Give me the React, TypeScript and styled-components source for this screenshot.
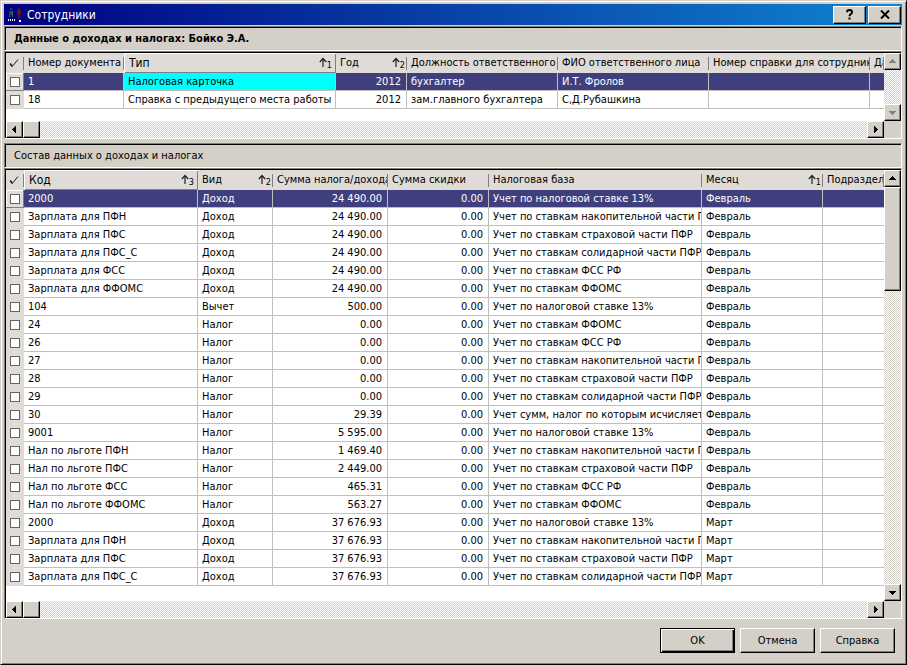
import React from "react";
import styled, { createGlobalStyle, css } from "styled-components";

const FACE = "#d4d0c8";
const HEAD = "#dfdcd8";
const SELECTED = "#403f7d";
const LINE = "#c0bfba";

const GlobalStyle = createGlobalStyle`
  * { box-sizing: border-box; }
  body { margin: 0; background: ${FACE}; }
  body, button, input, table {
    font-family: "DejaVu Sans Condensed", "Noto Sans", sans-serif;
    font-size: 11px;
    color: #000;
  }
`;

const raised = css`
  background: ${FACE};
  border: 1px solid;
  border-color: #fff #000 #000 #fff;
  box-shadow: inset -1px -1px 0 #808080;
  padding: 0;
  display: flex;
  align-items: center;
  justify-content: center;
`;

const dither = css`
  background: repeating-conic-gradient(#fff 0 25%, ${FACE} 0 50%) 0 0 / 2px 2px;
`;

const Window = styled.main`
  min-height: 100vh;
  display: flex;
  flex-direction: column;
  background: ${FACE};
  border: 1px solid;
  border-color: #d4d0c8 #000 #000 #d4d0c8;
  box-shadow: inset 1px 1px 0 #fff, inset -1px -1px 0 #808080;
  padding: 3px 4px 3px 3px;
`;

const TitleBar = styled.header`
  display: flex;
  align-items: center;
  gap: 2px;
  height: 21px;
  padding: 0 1px 0 3px;
  background: linear-gradient(to right, #000080, #1084d0);
`;

const Title = styled.h1`
  flex: 1;
  margin: 0;
  font-size: 12px;
  font-weight: normal;
  color: #fff;
`;

const CaptionButton = styled.button`
  ${raised}
  width: 33px;
  height: 18px;
`;

const Content = styled.div`
  flex: 1;
  display: flex;
  flex-direction: column;
  padding-top: 1px;
`;

const sunken = css`
  border: 1px solid;
  border-color: #808080 #fff #fff #808080;
`;

const Caption = styled.h2<{ $strong?: boolean }>`
  ${sunken}
  box-shadow: inset 1px 1px 0 #000;
  margin: 0;
  height: 25px;
  line-height: 24px;
  padding: 0 9px;
  font-size: 11px;
  font-weight: ${(p) => (p.$strong ? "bold" : "normal")};
`;

const Frame = styled.section<{ $fill?: boolean }>`
  ${sunken}
  display: grid;
  grid-template-columns: minmax(0, 1fr) 17px;
  grid-template-rows: minmax(0, 1fr) 17px;
  flex: ${(p) => (p.$fill ? "1" : "none")};
  margin-bottom: ${(p) => (p.$fill ? "9px" : "4px")};
  background: ${FACE};
`;

const Sheet = styled.div`
  background: #fff;
  border: solid #000;
  border-width: 1px 0 0 1px;
  padding-bottom: 12px;
  overflow: hidden;
`;

const Table = styled.table`
  width: 100%;
  table-layout: fixed;
  border-collapse: separate;
  border-spacing: 0;
`;

const Th = styled.th<{ $active?: boolean }>`
  height: 20px;
  padding: ${(p) => (p.$active ? "0 3px 0 5px" : "0 1px 0 4px")};
  font-weight: normal;
  font-size: ${(p) => (p.$active ? "12px" : "11px")};
  text-align: left;
  white-space: nowrap;
  overflow: hidden;
  background: ${HEAD} linear-gradient(#808080, #808080) right 4px / 1px 13px no-repeat;
  ${(p) =>
    p.$active &&
    css`
      background: ${HEAD};
      box-shadow: inset 1px 1px 0 #fff, inset -1px -1px 0 #808080;
    `}
`;

const HeadInner = styled.span`
  display: flex;
  align-items: center;
  justify-content: space-between;
  line-height: 16px;
  overflow: hidden;
`;

const HeadText = styled.span`
  min-width: 0;
  overflow: hidden;
`;

const SortMark = styled.span`
  display: flex;
  flex: none;
  align-items: flex-end;
  font-size: 9px;
  line-height: 10px;
  height: 13px;
  padding-right: 1px;
`;

const TickHead = styled.th`
  height: 20px;
  padding: 0 0 0 3px;
  background: ${HEAD} linear-gradient(#808080, #808080) right 4px / 1px 13px no-repeat;
  svg { display: block; }
`;

const Row = styled.tr<{ $selected?: boolean }>`
  color: ${(p) => (p.$selected ? "#fff" : "#000")};
  background: ${(p) => (p.$selected ? SELECTED : "#fff")};
`;

const Td = styled.td<{ $right?: boolean; $cursor?: boolean }>`
  height: 18px;
  padding: ${(p) => (p.$right ? "0 5px 0 4px" : "0 0 0 4px")};
  line-height: 17px;
  border: solid ${LINE};
  border-width: 0 1px 1px 0;
  text-align: ${(p) => (p.$right ? "right" : "left")};
  white-space: nowrap;
  color: inherit;
  ${(p) => p.$cursor && css`background: #00ffff; color: #000;`}
  &:last-child { border-right: 0; }
`;

const CellText = styled.div`
  overflow: hidden;
`;

const TickCell = styled.td<{ $selected?: boolean }>`
  height: 18px;
  padding: 0 0 0 4px;
  background: ${HEAD};
  ${(p) =>
    p.$selected &&
    css`box-shadow: inset -1px -1px 0 #808080, inset 1px 1px 0 #fff;`}
`;

const Tick = styled.input`
  appearance: none;
  display: block;
  width: 10px;
  height: 10px;
  margin: 0;
  border: 1px solid #66645f;
  background: #fff;
`;

const VBar = styled.div`
  ${dither}
  display: flex;
  flex-direction: column;
  border-top: 1px solid #000;
`;

const HBar = styled.div`
  ${dither}
  display: flex;
  border-left: 1px solid #000;
`;

const Spacer = styled.span`
  flex: 1;
`;

const ScrollButton = styled.button`
  ${raised}
  width: 17px;
  height: 17px;
  flex: none;
`;

const Thumb = styled.div<{ $long?: boolean }>`
  ${raised}
  flex: none;
  width: 17px;
  height: ${(p) => (p.$long ? "104px" : "17px")};
`;

const Footer = styled.footer`
  display: flex;
  justify-content: flex-end;
  gap: 5px;
  padding: 0 7px 8px;
`;

const PushButton = styled.button<{ $primary?: boolean }>`
  ${raised}
  width: 75px;
  height: 25px;
  ${(p) =>
    p.$primary &&
    css`
      border-color: #000;
      box-shadow: inset 1px 1px 0 #fff, inset -1px -1px 0 #000, inset -2px -2px 0 #808080;
    `}
`;

type Dir = "up" | "down" | "left" | "right";
const arrows: Record<Dir, string> = {
  up: "M3 1h1v1h1v1h1v1h1v1H0V4h1V3h1V2h1z",
  down: "M0 2h7v1H6v1H5v1H4v1H3V5H2V4H1V3H0z",
  left: "M5 0v7H4V6H3V5H2V4H1V3h1V2h1V1h1V0z",
  right: "M2 0h1v1h1v1h1v1h1v1H5v1H4v1H3v1H2z",
};

const Arrow = ({ dir, off, label }: { dir: Dir; off?: boolean; label: string }) => (
  <ScrollButton type="button" aria-label={label} disabled={off}>
    <svg width="7" height="7" viewBox="0 0 7 7" shapeRendering="crispEdges">
      <path d={arrows[dir]} fill={off ? "#808080" : "#000"} />
    </svg>
  </ScrollButton>
);

const AppIcon = () => (
  <svg width="18" height="17" viewBox="0 0 18 17" shapeRendering="crispEdges">
    <path d="M3 2h2v2H3zM2 5h4v4H2z" fill="#1d4a45" />
    <path d="M5 5h1v6H5zM2 9h1v2H2z" fill="#4a6468" />
    <path d="M11 2h2v2h-2zM10 4h4v5h-4zM11 9h2v4h-2z" fill="#5b1130" />
    <path d="M1 13h1v2H1zM3 13h1v2H3zM5 13h1v2H5zM7 13h1v2H7zM12 14h2v2h-2z" fill="#fff" />
  </svg>
);

const CheckGlyph = () => (
  <svg width="11" height="11" viewBox="0 0 11 11">
    <path d="M1 6l2.2 2.6L9 1.5" fill="none" stroke="#222" strokeWidth="1" />
    <path d="M1.2 5.6l2 2.6" fill="none" stroke="#222" strokeWidth="1.6" />
  </svg>
);

const SortArrow = () => (
  <svg width="8" height="13" viewBox="0 0 8 13">
    <path d="M4 10V2M.8 5L4 1.5 7.2 5" fill="none" stroke="#222" strokeWidth="1.2" />
  </svg>
);

interface Column {
  title: string;
  width?: number;
  sort?: number;
  active?: boolean;
  right?: boolean;
}

interface GridProps {
  name: string;
  columns: Column[];
  rows: string[][];
  cursor?: number;
  fill?: boolean;
}

const DataGrid = ({ name, columns, rows, cursor, fill }: GridProps) => (
  <Frame $fill={fill} aria-label={name}>
    <Sheet>
      <Table>
        <colgroup>
          <col width={18} />
          {columns.map((c) => (
            <col key={c.title} width={c.width} />
          ))}
        </colgroup>
        <thead>
          <tr>
            <TickHead aria-label="Отметка">
              <CheckGlyph />
            </TickHead>
            {columns.map((c) => (
              <Th key={c.title} $active={c.active}>
                <HeadInner>
                  <HeadText>{c.title}</HeadText>
                  {c.sort && (
                    <SortMark>
                      <SortArrow />
                      {c.sort}
                    </SortMark>
                  )}
                </HeadInner>
              </Th>
            ))}
          </tr>
        </thead>
        <tbody>
          {rows.map((row, r) => (
            <Row key={r} $selected={r === 0}>
              <TickCell $selected={r === 0}>
                <Tick type="checkbox" aria-label={row[0]} />
              </TickCell>
              {columns.map((c, i) => (
                <Td key={c.title} $right={c.right} $cursor={r === 0 && i === cursor}>
                  <CellText>{row[i]}</CellText>
                </Td>
              ))}
            </Row>
          ))}
        </tbody>
      </Table>
    </Sheet>
    <VBar>
      <Arrow dir="up" off={!fill} label="Вверх" />
      {fill && <Thumb $long />}
      <Spacer />
      <Arrow dir="down" off={!fill} label="Вниз" />
    </VBar>
    <HBar>
      <Arrow dir="left" label="Влево" />
      <Thumb />
      <Spacer />
      <Arrow dir="right" label="Вправо" />
    </HBar>
  </Frame>
);

const documentColumns: Column[] = [
  { title: "Номер документа", width: 100 },
  { title: "Тип", width: 212, sort: 1, active: true },
  { title: "Год", width: 71, sort: 2, right: true },
  { title: "Должность ответственного", width: 151 },
  { title: "ФИО ответственного лица", width: 151 },
  { title: "Номер справки для сотрудника", width: 161 },
  { title: "Дата" },
];

const documents = [
  ["1", "Налоговая карточка", "2012", "бухгалтер", "И.Т. Фролов", "", ""],
  ["18", "Справка с предыдущего места работы", "2012", "зам.главного бухгалтера", "С,Д.Рубашкина", "", ""],
];

const detailColumns: Column[] = [
  { title: "Код", width: 174, sort: 3, active: true },
  { title: "Вид", width: 75, sort: 2 },
  { title: "Сумма налога/дохода", width: 115, right: true },
  { title: "Сумма скидки", width: 101, right: true },
  { title: "Налоговая база", width: 213 },
  { title: "Месяц", width: 121, sort: 1 },
  { title: "Подразделение" },
];

const RATE = "Учет по налоговой ставке 13%";
const SAVINGS = "Учет по ставкам накопительной части ПФР";
const INSURANCE = "Учет по ставкам страховой части ПФР";
const SOLIDARY = "Учет по ставкам солидарной части ПФР";
const FSS = "Учет по ставкам ФСС РФ";
const FFOMS = "Учет по ставкам ФФОМС";

const entry = (code: string, kind: string, sum: string, base: string, month = "Февраль") => [
  code, kind, sum, "0.00", base, month, "",
];

const details = [
  entry("2000", "Доход", "24 490.00", RATE),
  entry("Зарплата для ПФН", "Доход", "24 490.00", SAVINGS),
  entry("Зарплата для ПФС", "Доход", "24 490.00", INSURANCE),
  entry("Зарплата для ПФС_С", "Доход", "24 490.00", SOLIDARY),
  entry("Зарплата для ФСС", "Доход", "24 490.00", FSS),
  entry("Зарплата для ФФОМС", "Доход", "24 490.00", FFOMS),
  entry("104", "Вычет", "500.00", RATE),
  entry("24", "Налог", "0.00", FFOMS),
  entry("26", "Налог", "0.00", FSS),
  entry("27", "Налог", "0.00", SAVINGS),
  entry("28", "Налог", "0.00", INSURANCE),
  entry("29", "Налог", "0.00", SOLIDARY),
  entry("30", "Налог", "29.39", "Учет сумм, налог по которым исчисляется"),
  entry("9001", "Налог", "5 595.00", RATE),
  entry("Нал по льготе ПФН", "Налог", "1 469.40", SAVINGS),
  entry("Нал по льготе ПФС", "Налог", "2 449.00", INSURANCE),
  entry("Нал по льготе ФСС", "Налог", "465.31", FSS),
  entry("Нал по льготе ФФОМС", "Налог", "563.27", FFOMS),
  entry("2000", "Доход", "37 676.93", RATE, "Март"),
  entry("Зарплата для ПФН", "Доход", "37 676.93", SAVINGS, "Март"),
  entry("Зарплата для ПФС", "Доход", "37 676.93", INSURANCE, "Март"),
  entry("Зарплата для ПФС_С", "Доход", "37 676.93", SOLIDARY, "Март"),
];

export default function App() {
  return (
    <>
      <GlobalStyle />
      <Window>
        <TitleBar>
          <AppIcon />
          <Title>Сотрудники</Title>
          <CaptionButton type="button" aria-label="Помощь">
            <svg width="9" height="11" viewBox="0 0 9 11">
              <path d="M2 3.2C2 .4 7 .4 7 3.2 7 5 4.5 5 4.5 7.2M4.5 8.6v2" fill="none" stroke="#000" strokeWidth="2" />
            </svg>
          </CaptionButton>
          <CaptionButton type="button" aria-label="Закрыть">
            <svg width="10" height="9" viewBox="0 0 10 9">
              <path d="M1 .5l8 8M9 .5l-8 8" stroke="#000" strokeWidth="2" />
            </svg>
          </CaptionButton>
        </TitleBar>
        <Content>
          <Caption $strong>Данные о доходах и налогах: Бойко Э.А.</Caption>
          <DataGrid name="Данные о доходах и налогах" columns={documentColumns} rows={documents} cursor={1} />
          <Caption>Состав данных о доходах и налогах</Caption>
          <DataGrid name="Состав данных о доходах и налогах" columns={detailColumns} rows={details} fill />
          <Footer>
            <PushButton type="button" $primary>OK</PushButton>
            <PushButton type="button">Отмена</PushButton>
            <PushButton type="button">Справка</PushButton>
          </Footer>
        </Content>
      </Window>
    </>
  );
}
